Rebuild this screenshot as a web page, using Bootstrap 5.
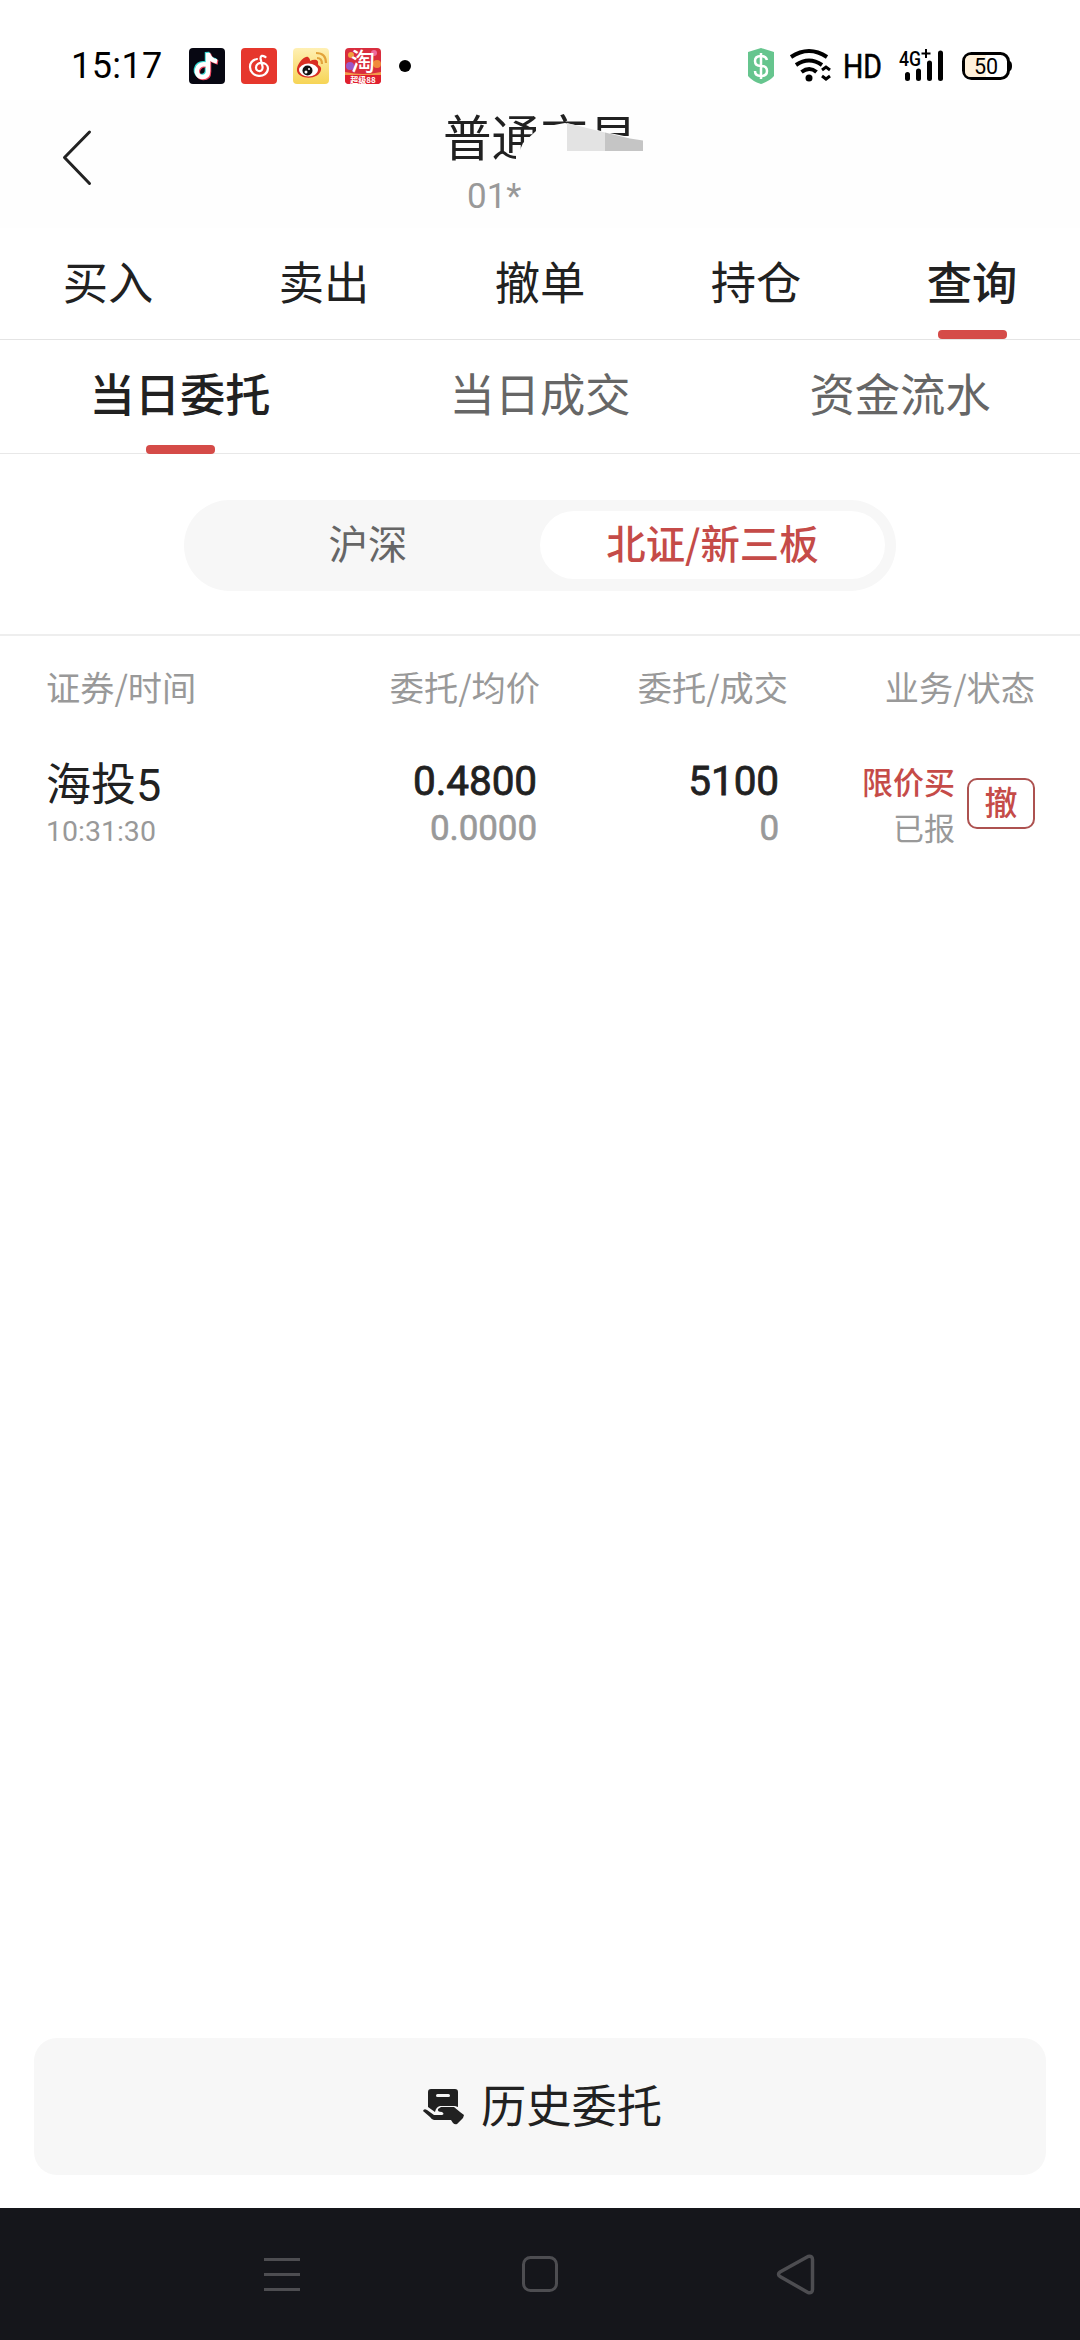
<!DOCTYPE html>
<html lang="zh-CN">
<head>
<meta charset="utf-8">
<meta name="viewport" content="width=device-width, initial-scale=1">
<title>普通交易</title>
<link href="https://cdn.jsdelivr.net/npm/bootstrap@5.3.0/dist/css/bootstrap.min.css" rel="stylesheet">
<style>
body{width:1080px;height:2340px;margin:0;overflow:hidden;background:#fff;color:#212121;font-family:Roboto,"Noto Sans CJK SC",sans-serif;line-height:1;font-size:45px}
svg{display:block;flex:none;overflow:visible}
.statusbar{height:100px;padding:31px 67px 0 71px;color:#000}
.clock{font-size:36px;letter-spacing:.4px;width:118px;line-height:70px}
.appicons{padding-top:17px;gap:16px}
.titlebar{height:128px;background:#fefefe}
.backbtn{left:60px;top:28px}
.apptitle{font:400 48.5px/56px "Noto Sans CJK SC",sans-serif;left:443px;top:7px}
.acct{font-size:35px;color:#999;left:467px;top:79px;line-height:36px}
.coverup{left:500px;top:6px}
.cjk{font-family:"Noto Sans CJK SC",sans-serif}
.maintabs{height:112px;border-bottom:1px solid #e4e4e4}
.subtabs{height:114px;border-bottom:1px solid #e8e8e8;color:#666}
.tabitem{font-size:45.3px;position:relative;display:flex;justify-content:center;line-height:66px}
.maintabs .tabitem{padding-top:19px}
.subtabs .tabitem{padding-top:19px}
.tabitem.active{font-weight:500;color:#212121}
.tabitem.active::after{content:"";position:absolute;bottom:0;width:69px;height:9px;border-radius:4px;background:#d54b48}
.subtabs .tabitem.active::after{bottom:-1px}
.segwrap{height:182px;padding-top:46px;border-bottom:2px solid #eee}
.segbox{width:712px;height:91px;border-radius:46px;background:#f7f7f7;padding:11px 11px 12px 12px;font-size:39.4px}
.segbox>div{line-height:62px;border-radius:34px;height:68px;text-align:center}
.segbox .on{background:#fff;color:#c54b48;font-weight:500;width:345px}
.listhead{height:105px;padding:0 45px 0 46px;font-size:34.2px;color:#999;line-height:100px}
.orderrow{padding:0 45px 0 46px;height:120px}
.c1{width:164px}.c2{width:330px}.c3{width:248px}.c4{width:247px}
.stockname{line-height:90px;height:66px}
.stocktime{font-size:28.5px;color:#999;line-height:50px}
.c2.nums{padding:18px 3px 0 0}
.c3.nums{padding:18px 9px 0 0}
.n1{font-size:40.5px;line-height:45px;letter-spacing:-.1px;-webkit-text-stroke:.8px #212121}
.n2{font-size:35px;color:#999;line-height:49px;letter-spacing:-.1px;-webkit-text-stroke:.6px #999}
.bizcol{font-size:31px;padding:18px 12px 0 0}
.undo{width:68px;height:51px;margin-top:37px;border:2px solid #ad5250;border-radius:10px;color:#c54b48;font-size:33px;font-weight:500;line-height:42px;background:#fff;text-align:center}
.histbtn{margin:0 34px 33px;height:137px;border-radius:23px;background:#f7f7f7;gap:17px;padding-left:4px}
.histlabel{line-height:60px;padding-bottom:8px;font-size:45.3px}
.sysnav{height:132px;background:#15161b}
</style>
</head>
<body class="d-flex flex-column">
<header class="statusbar d-flex">
  <div class="clock">15:17</div>
  <div class="appicons d-flex">
    <svg width="36" height="36" viewBox="0 0 36 36"><rect width="36" height="36" rx="4" fill="#070712"/><g fill="none" stroke-width="4.5"><path d="M17 16.500c-11-2-12 12.500-3.500 12.500q5.500 0 5.500-6V5q1 7 9 8.500" stroke="#35d8d4" transform="translate(-1,-1)"/><path d="M17 16.500c-11-2-12 12.500-3.500 12.500q5.500 0 5.500-6V5q1 7 9 8.500" stroke="#f24660" transform="translate(1,1)"/><path d="M17 16.500c-11-2-12 12.500-3.500 12.500q5.500 0 5.500-6V5q1 7 9 8.500" stroke="#fff"/></g></svg>
    <svg width="36" height="36" viewBox="0 0 36 36"><rect width="36" height="36" rx="4" fill="#e6372d"/><path d="M24.500 9q-5-3-5 1.500l2 8c1 6-6.500 6-6.500 1 0-6.500 12-6 12 1-1 11-18 9-18-1.500q0-6.500 7-8" fill="none" stroke="#fff" stroke-width="2.2" stroke-linecap="round"/></svg>
    <svg width="36" height="36" viewBox="0 0 36 36"><defs><linearGradient id="wb" x2="0" y2="1"><stop stop-color="#fff0b4"/><stop offset="1" stop-color="#f6d455"/></linearGradient></defs><rect width="36" height="36" rx="4" fill="url(#wb)"/><path d="M16 10c-3-5-13 6-12 13 2 9 22 9 24-1 1-4-3-4-3-6 1-5-4-5-8-3 0-1 0-2-1-3Z" fill="#d92e22"/><ellipse cx="15.500" cy="22" rx="9.500" ry="6.500" fill="#fff"/><circle cx="14.500" cy="22.500" r="5" fill="#111"/><circle cx="13" cy="24" r="1.500" fill="#fff"/><circle cx="16" cy="21" r="1" fill="#fff"/><path d="M24 10q5 0 5 6M23 5q10 0 10 10" fill="none" stroke="#e3a33b" stroke-width="2.200"/></svg>
    <svg width="36" height="36" viewBox="0 0 36 36"><rect width="36" height="36" rx="4" fill="#d92d3e"/><circle cx="5" cy="18" r="4" fill="#9a58c8"/><circle cx="32" cy="16" r="4" fill="#f08a3c"/><circle cx="29" cy="5" r="3" fill="#ee6a9c"/><circle cx="6" cy="7" r="3" fill="#f0a040"/><path d="M0 24q18 4 36 0v4H0z" fill="#f39a4a"/><path d="M0 27h36v5q0 4-4 4H4q-4 0-4-4z" fill="#e0202e"/><text x="18" y="22" font-size="24" font-weight="500" text-anchor="middle" fill="#fff" font-family="Noto Sans CJK SC">淘</text><text x="18" y="34.500" font-size="8" font-weight="700" text-anchor="middle" fill="#fff" font-family="Noto Sans CJK SC">超级88</text></svg>
    <svg width="14" height="36"><circle cx="8" cy="18" r="6"/></svg>
  </div>
  <svg class="ms-auto" style="margin-top:14px" width="268" height="42" viewBox="744 45 268 42">
    <path d="M760 48l13 4v24q-4 5-13 8-9-3-13-8V52z" fill="#66c58e"/><path d="M766 60q-1-4-6-4-6 0-6 5t6 5 6 5-6 5q-6 0-6-5M760 53v26" fill="none" stroke="#fff" stroke-width="2.500"/>
    <g fill="none" stroke="#000" stroke-width="4"><path d="M790 57q18-12 36 0M795 65q13-9 26 0M800.500 72q8-6 15 0"/><path d="M821 70l4-3 4 3M821 76l4 3 4-3" stroke-width="3"/></g><circle cx="808" cy="78" r="3.500"/>
    <text x="842" y="78" font-size="33" stroke="#000" stroke-width=".6" textLength="39" lengthAdjust="spacingAndGlyphs">HD</text>
    <text x="898" y="66" font-size="20" font-weight="500" textLength="22" lengthAdjust="spacingAndGlyphs">4G</text>
    <path d="M920.500 53.500h9M925 49v9" stroke="#000" stroke-width="2"/>
    <path d="M906.500 74.500v4M917.500 71v7.500M928.500 63v15.500M939.500 53v25.500" stroke="#000" stroke-width="5" stroke-linecap="round"/>
    <rect x="962.500" y="53.500" width="45" height="25" rx="8" fill="#fff" stroke="#000" stroke-width="3"/><path d="M970 55h15v22h-15q-6 0-6-6V61q0-6 6-6z" fill="#fff1da"/><path d="M1008 61q3 0 3 5t-3 5z"/><text x="985" y="73.500" font-size="21.500" text-anchor="middle">50</text>
  </svg>
</header>
<div class="titlebar position-relative">
  <svg class="backbtn position-absolute" width="34" height="60" viewBox="0 0 34 60" fill="none" stroke="#222" stroke-width="3" stroke-linecap="round" stroke-linejoin="round"><path d="M29.500 4L4.500 29.500l25 26"/></svg>
  <div class="apptitle position-absolute text-nowrap">普通交易</div>
  <div class="acct position-absolute">01*</div>
  <svg class="coverup position-absolute" width="160" height="100" viewBox="500 106 160 100"><path d="M536 131l-13 12-3 7-4 4v12h127v-26l-38-8-20-5-20-4-22 4z" fill="#fefefe"/><path d="M567 123l38 9.500V151H567z" fill="#e3e3e3"/><path d="M605 132.500l25 6 13 2V151h-38z" fill="#c5c5c5"/></svg>
</div>
<nav class="maintabs d-flex cjk">
  <div class="tabitem col">买入</div><div class="tabitem col">卖出</div><div class="tabitem col">撤单</div><div class="tabitem col">持仓</div><div class="tabitem col active">查询</div>
</nav>
<nav class="subtabs d-flex cjk">
  <div class="tabitem col active">当日委托</div><div class="tabitem col">当日成交</div><div class="tabitem col">资金流水</div>
</nav>
<section class="segwrap cjk">
  <div class="segbox d-flex mx-auto"><div class="flex-fill" style="color:#666">沪深</div><div class="on">北证/新三板</div></div>
</section>
<section class="listhead d-flex cjk text-nowrap">
  <div class="c1">证券/时间</div><div class="c2 text-end">委托/均价</div><div class="c3 text-end">委托/成交</div><div class="c4 text-end">业务/状态</div>
</section>
<section class="orderrow d-flex">
  <div class="c1"><div class="stockname">海投5</div><div class="stocktime">10:31:30</div></div>
  <div class="c2 nums text-end"><div class="n1">0.4800</div><div class="n2">0.0000</div></div>
  <div class="c3 nums text-end"><div class="n1">5100</div><div class="n2">0</div></div>
  <div class="c4 d-flex justify-content-end cjk">
    <div class="bizcol text-end"><div style="font-weight:500;color:#c54b48;line-height:44px">限价买</div><div style="color:#999;line-height:48px">已报</div></div>
    <div class="undo">撤</div>
  </div>
</section>
<div class="histbtn d-flex align-items-center justify-content-center mt-auto cjk">
  <svg width="42" height="38" viewBox="422 2089 42 38" fill="#212121"><path d="M431 2090h24q3 0 3 3v15l-3-1h-15q-4 1-5 6l-7-5v-15q0-3 3-3z"/><rect x="436" y="2095" width="14" height="3" rx="1.500" fill="#f7f7f7"/><path d="M423 2112q1-3 4-1l7 5h8q3-1 0-3-5 0-4-3l3-2h13l6 5 4 3-1 3-6 6q-2 1-4-1l-2-3h-17q-2 0-4-3z"/></svg>
  <div class="histlabel">历史委托</div>
</div>
<footer class="sysnav">
  <svg width="1080" height="132" viewBox="0 2208 1080 132" fill="none" stroke="#4d4d51" stroke-width="3"><path d="M264 2259.500h36M264 2274.500h36M264 2289.500h36"/><rect x="523.500" y="2257.500" width="33" height="33" rx="7"/><path d="M808 2256.500l-28 15.500q-3 2 0 4.500l28 16q4.500 1 4.500-3v-30q0-4-4.500-3z" stroke-width="3.500" stroke-linejoin="round"/></svg>
</footer>
<script src="https://cdn.jsdelivr.net/npm/bootstrap@5.3.0/dist/js/bootstrap.bundle.min.js"></script>
</body>
</html>
